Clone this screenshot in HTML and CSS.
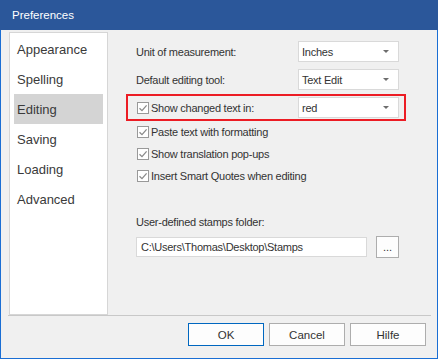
FILE: index.html
```html
<!DOCTYPE html>
<html lang="en">
<head>
    <meta charset="UTF-8">
    <title>Preferences</title>
    <link rel="stylesheet" href="styles.css">
</head>
<body>
    <div class="window">
        <div class="titlebar">Preferences</div>

        <div class="content">
            <!-- Category list -->
            <ul class="nav">
                <li>Appearance</li>
                <li>Spelling</li>
                <li class="active">Editing</li>
                <li>Saving</li>
                <li>Loading</li>
                <li>Advanced</li>
            </ul>

            <!-- Editing options -->
            <div class="panel">
                <div class="row">
                    <span class="label">Unit of measurement:</span>
                    <div class="combo">Inches<span class="arrow"></span></div>
                </div>
                <div class="row row-second">
                    <span class="label">Default editing tool:</span>
                    <div class="combo">Text Edit<span class="arrow"></span></div>
                </div>
                <div class="row highlight">
                    <span class="label check">
                        <svg class="box" width="12" height="12" viewBox="0 0 12 12"><rect x="0.5" y="0.5" width="11" height="11" fill="#fff" stroke="#999"/><path d="M2.5 6.2 L5 8.6 L9.6 3.4" fill="none" stroke="#8a8a8a" stroke-width="1.3"/></svg>Show changed text in:
                    </span>
                    <div class="combo">red<span class="arrow"></span></div>
                </div>
                <div class="check-row">
                    <svg class="box" width="12" height="12" viewBox="0 0 12 12"><rect x="0.5" y="0.5" width="11" height="11" fill="#fff" stroke="#999"/><path d="M2.5 6.2 L5 8.6 L9.6 3.4" fill="none" stroke="#8a8a8a" stroke-width="1.3"/></svg>Paste text with formatting
                </div>
                <div class="check-row">
                    <svg class="box" width="12" height="12" viewBox="0 0 12 12"><rect x="0.5" y="0.5" width="11" height="11" fill="#fff" stroke="#999"/><path d="M2.5 6.2 L5 8.6 L9.6 3.4" fill="none" stroke="#8a8a8a" stroke-width="1.3"/></svg>Show translation pop-ups
                </div>
                <div class="check-row">
                    <svg class="box" width="12" height="12" viewBox="0 0 12 12"><rect x="0.5" y="0.5" width="11" height="11" fill="#fff" stroke="#999"/><path d="M2.5 6.2 L5 8.6 L9.6 3.4" fill="none" stroke="#8a8a8a" stroke-width="1.3"/></svg>Insert Smart Quotes when editing
                </div>

                <div class="folder-label">User-defined stamps folder:</div>
                <div class="folder-row">
                    <div class="field">C:\Users\Thomas\Desktop\Stamps</div>
                    <button class="browse">...</button>
                </div>
            </div>
        </div>

        <div class="footer">
            <button class="btn default">OK</button>
            <button class="btn">Cancel</button>
            <button class="btn">Hilfe</button>
        </div>
    </div>
</body>
</html>
```

FILE: styles.css
```css
body {
    margin: 0;
    font-family: "Liberation Sans", Arial, sans-serif;
    background-color: #f0f0f0;
}
.window {
    width: 438px;
    height: 359px;
    box-sizing: border-box;
    border: 1px solid #1a6ed4;
    border-top: none;
    background-color: #f0f0f0;
    color: #333;
}
.titlebar {
    height: 30px;
    line-height: 30px;
    margin: 0 -1px;
    padding-left: 12px;
    background-color: #2b579a;
    color: #fff;
    font-size: 11.5px;
}
.content {
    display: flex;
    height: 285px;
}
.nav {
    list-style: none;
    margin: 2px 0 0 8px;
    padding: 1px 4px;
    width: 99px;
    height: 283px;
    box-sizing: border-box;
    border: 1px solid #d6d6d6;
    background-color: #fff;
}
.nav li {
    height: 30px;
    line-height: 31px;
    padding-left: 3px;
    font-size: 13px;
    color: #3a3a3a;
}
.nav li.active {
    background-color: #d4d4d4;
}
.panel {
    flex: 1;
    padding: 11px 0 0 28px;
    font-size: 11px;
    letter-spacing: -0.25px;
}
.row {
    display: flex;
    align-items: center;
    height: 21px;
}
.row-second {
    margin-top: 7px;
}
.label {
    width: 162px;
}
.combo {
    position: relative;
    width: 101px;
    height: 21px;
    line-height: 20px;
    box-sizing: border-box;
    padding-left: 3px;
    border: 1px solid #d9d9d9;
    background-color: #fff;
}
.arrow {
    position: absolute;
    right: 9px;
    top: 8px;
    border-left: 3px solid transparent;
    border-right: 3px solid transparent;
    border-top: 3px solid #6d6d6d;
}
.highlight {
    height: 27px;
    width: 280px;
    box-sizing: border-box;
    margin: 4px 0 0 -10px;
    padding-left: 9px;
    border: 2px solid #ec1c24;
}
.highlight .label {
    width: 161px;
}
.check, .check-row {
    display: flex;
    align-items: center;
}
.check-row {
    height: 22px;
    padding-left: 1px;
}
.box {
    margin-right: 2px;
    flex-shrink: 0;
}
.folder-label {
    margin-top: 25px;
    height: 20px;
    line-height: 20px;
}
.folder-row {
    display: flex;
    align-items: center;
    margin-top: 4px;
}
.field {
    width: 231px;
    height: 20px;
    line-height: 18px;
    box-sizing: border-box;
    padding-left: 4px;
    border: 1px solid #d9d9d9;
    background-color: #fff;
}
.browse {
    margin-left: 9px;
    width: 23px;
    height: 22px;
    padding: 0;
    font-family: inherit;
    font-size: 11px;
    color: #333;
    border: 1px solid #adadad;
    background-color: #fdfdfd;
}
.footer {
    display: flex;
    justify-content: flex-end;
    gap: 5px;
    margin: 0 6px 0 7px;
    padding: 7px 5px 0 0;
    border-top: 1px solid #c8c8c8;
}
.btn {
    width: 76px;
    height: 23px;
    padding: 0;
    font-family: inherit;
    font-size: 11.5px;
    color: #333;
    border: 1px solid #adadad;
    background-color: #fdfdfd;
}
.btn.default {
    border-color: #0067c0;
}
```
